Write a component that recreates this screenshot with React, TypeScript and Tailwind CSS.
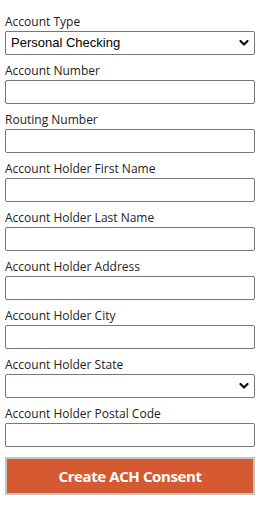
import { useState } from 'react';

const fields = [
  'Account Number',
  'Routing Number',
  'Account Holder First Name',
  'Account Holder Last Name',
  'Account Holder Address',
  'Account Holder City',
];

function Chevron() {
  return (
    <svg
      className="pointer-events-none absolute right-[6px] top-1/2 -translate-y-1/2"
      width="10"
      height="7"
      viewBox="0 0 10 7"
      fill="none"
    >
      <path d="M1.5 1.5 L5 5 L8.5 1.5" stroke="#111" strokeWidth="2.2" strokeLinecap="round" strokeLinejoin="round" />
    </svg>
  );
}

export default function App() {
  const [accountType, setAccountType] = useState('personal-checking');
  const [state, setState] = useState('');

  const labelCls = 'block h-4 text-[12px] leading-4 text-[#222]';
  const inputCls =
    'mt-px block h-[24px] w-full rounded-[2px] border border-[#767676] bg-white px-1 text-[13px] text-black outline-none';

  return (
    <div className="min-h-screen bg-white font-['Open_Sans',sans-serif]">
      <form className="flex w-[260px] flex-col gap-2 px-[5px] pt-[14px]" onSubmit={(e) => e.preventDefault()}>
        <div>
          <label className={labelCls}>Account Type</label>
          <div className="relative">
            <select
              value={accountType}
              onChange={(e) => setAccountType(e.target.value)}
              className={inputCls + " appearance-none pl-[5px] font-['Liberation_Sans',Arial,sans-serif]"}
            >
              <option value="personal-checking">Personal Checking</option>
              <option value="personal-savings">Personal Savings</option>
              <option value="business-checking">Business Checking</option>
            </select>
            <Chevron />
          </div>
        </div>

        {fields.map((f) => (
          <div key={f}>
            <label className={labelCls}>{f}</label>
            <input type="text" className={inputCls} />
          </div>
        ))}

        <div>
          <label className={labelCls}>Account Holder State</label>
          <div className="relative">
            <select
              value={state}
              onChange={(e) => setState(e.target.value)}
              className={inputCls + " appearance-none font-['Liberation_Sans',Arial,sans-serif]"}
            >
              <option value=""></option>
              <option value="CA">CA</option>
              <option value="NY">NY</option>
              <option value="TX">TX</option>
            </select>
            <Chevron />
          </div>
        </div>

        <div>
          <label className={labelCls}>Account Holder Postal Code</label>
          <input type="text" className={inputCls} />
        </div>

        <button
          type="submit"
          className="mt-[2px] h-[38px] w-full border-2 border-[#c4c4c4] bg-[#d65a31] text-[15px] font-bold tracking-[-0.4px] text-white"
        >
          Create ACH Consent
        </button>
      </form>
    </div>
  );
}
